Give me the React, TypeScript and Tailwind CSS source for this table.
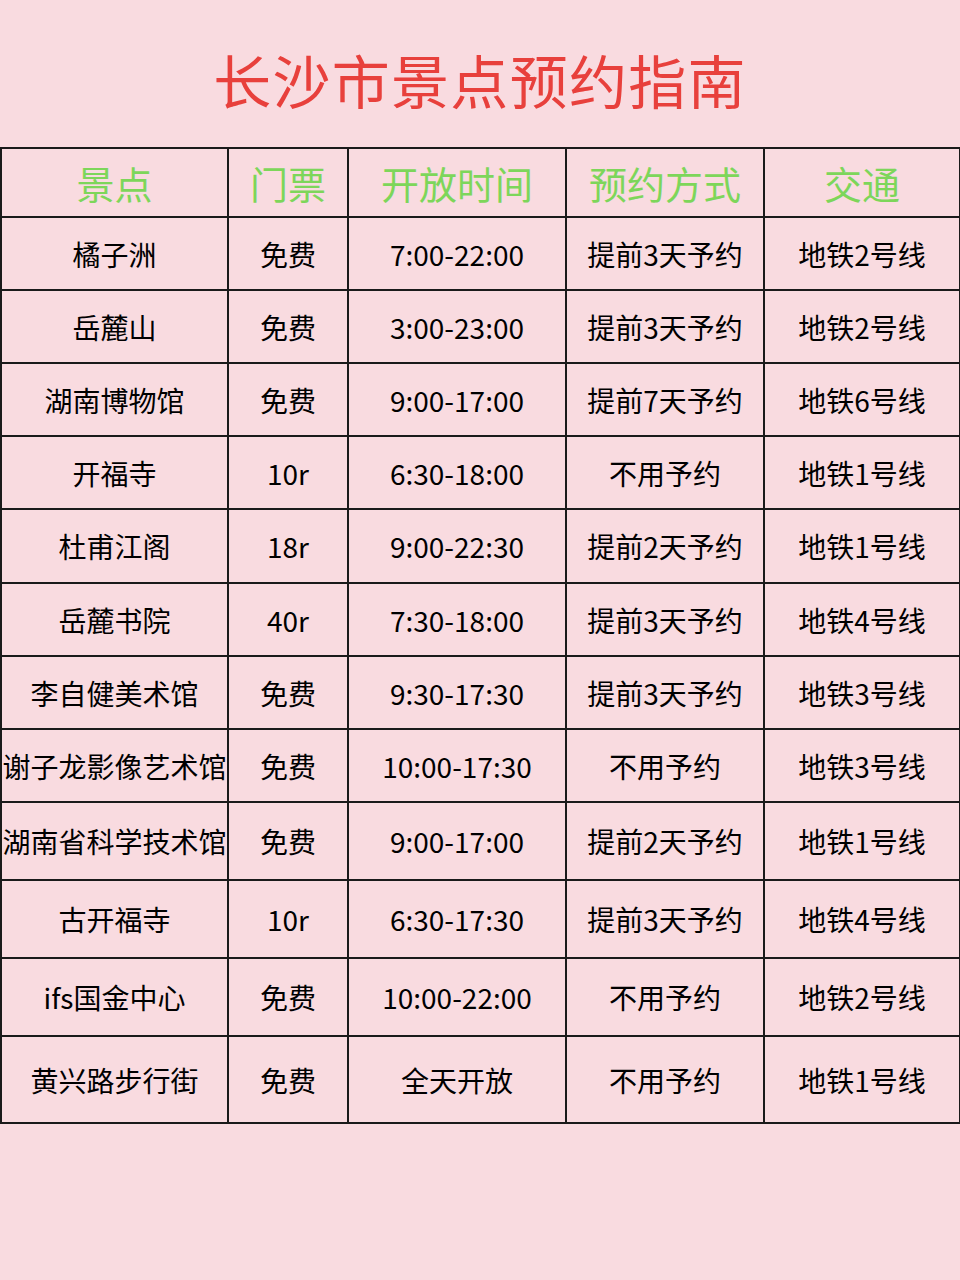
const rows: [string, string, string, string, string, number][] = [
  ["橘子洲", "免费", "7:00-22:00", "提前3天予约", "地铁2号线", 73],
  ["岳麓山", "免费", "3:00-23:00", "提前3天予约", "地铁2号线", 73],
  ["湖南博物馆", "免费", "9:00-17:00", "提前7天予约", "地铁6号线", 73],
  ["开福寺", "10r", "6:30-18:00", "不用予约", "地铁1号线", 73],
  ["杜甫江阁", "18r", "9:00-22:30", "提前2天予约", "地铁1号线", 74],
  ["岳麓书院", "40r", "7:30-18:00", "提前3天予约", "地铁4号线", 73],
  ["李自健美术馆", "免费", "9:30-17:30", "提前3天予约", "地铁3号线", 73],
  ["谢子龙影像艺术馆", "免费", "10:00-17:30", "不用予约", "地铁3号线", 73],
  ["湖南省科学技术馆", "免费", "9:00-17:00", "提前2天予约", "地铁1号线", 78],
  ["古开福寺", "10r", "6:30-17:30", "提前3天予约", "地铁4号线", 78],
  ["ifs国金中心", "免费", "10:00-22:00", "不用予约", "地铁2号线", 78],
  ["黄兴路步行街", "免费", "全天开放", "不用予约", "地铁1号线", 87],
];

const headers = ["景点", "门票", "开放时间", "预约方式", "交通"];

export default function App() {
  return (
    <div
      className="w-[960px] h-[1280px] bg-[#f9dbe0] overflow-hidden"
      style={{ fontFamily: '"Noto Sans CJK SC", "Noto Sans", sans-serif' }}
    >
      <h1 className="h-[147px] pt-[10px] flex items-center justify-center text-[58px] text-[#e8403c] tracking-[1.3px] leading-none">
        长沙市景点预约指南
      </h1>
      <table className="w-[959px] table-fixed border-collapse text-black">
        <colgroup>
          <col className="w-[227px]" />
          <col className="w-[120px]" />
          <col className="w-[218px]" />
          <col className="w-[198px]" />
          <col className="w-[196px]" />
        </colgroup>
        <thead>
          <tr className="h-[69px]">
            {headers.map((h) => (
              <th
                key={h}
                className="border-2 border-[#1a1a1a] p-0 text-center text-[38px] font-normal text-[#7dd65a] leading-none"
              >
                {h}
              </th>
            ))}
          </tr>
        </thead>
        <tbody>
          {rows.map((r) => (
            <tr key={r[0]} style={{ height: r[5] }}>
              {r.slice(0, 5).map((c, i) => (
                <td
                  key={i}
                  className="border-2 border-[#1a1a1a] p-0 text-center text-[28px] leading-none whitespace-nowrap"
                >
                  {c}
                </td>
              ))}
            </tr>
          ))}
        </tbody>
      </table>
    </div>
  );
}
